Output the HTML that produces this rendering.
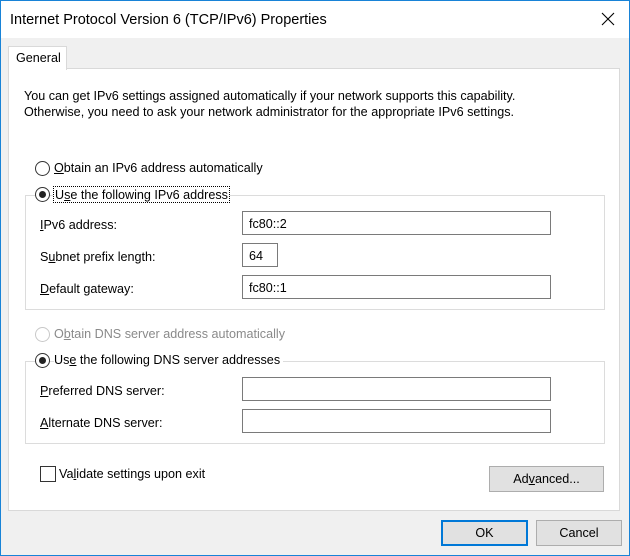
<!DOCTYPE html>
<html><head><meta charset="utf-8"><style>
*{margin:0;padding:0;box-sizing:border-box}
body{width:630px;height:556px;overflow:hidden;font-family:"Liberation Sans",sans-serif;font-size:12.6px;color:#000;background:#f0f0f0}
.win{position:absolute;left:0;top:0;width:630px;height:556px;background:#f0f0f0}
.bd{position:absolute;left:0;top:0;width:630px;height:556px;border:1px solid #1883d7;z-index:5;pointer-events:none}
.title{position:absolute;left:1px;top:1px;width:628px;height:37px;background:#fff}
.title span{position:absolute;left:9px;top:11px;font-size:14.5px}
.a{position:absolute;white-space:nowrap}
.panel{position:absolute;left:8px;top:68px;width:612px;height:443px;background:#fff;border:1px solid #d9d9d9}
.tab{position:absolute;left:8px;top:46px;width:59px;height:24px;background:#fff;border:1px solid #d9d9d9;border-bottom:none}
.grp{position:absolute;border:1px solid #dcdcdc}
.inp{position:absolute;border:1px solid #7a7a7a;background:#fff;height:24px;padding:5px 0 0 6px}
.rad{position:absolute;width:15px;height:15px;border:1px solid #333;border-radius:50%;background:#fff}
.rad.on::after{content:"";position:absolute;left:3px;top:3px;width:7px;height:7px;border-radius:50%;background:#222}
.btn{position:absolute;background:#e1e1e1;border:1px solid #adadad;text-align:center;height:26px;line-height:25px}
u{text-decoration:underline}
</style></head><body><div class="win">
<div class="bd"></div>
<div class="title"><span>Internet Protocol Version 6 (TCP/IPv6) Properties</span>
<svg style="position:absolute;left:600px;top:11px" width="14" height="14"><path d="M1 1L13 13M13 1L1 13" stroke="#000" stroke-width="1.1"/></svg></div>
<div class="panel"></div>
<div class="tab"></div>
<div class="a" style="left:16px;top:51px">General</div>
<div class="a" style="left:24px;top:88px;line-height:16px">You can get IPv6 settings assigned automatically if your network supports this capability.<br>Otherwise, you need to ask your network administrator for the appropriate IPv6 settings.</div>

<div class="grp" style="left:25px;top:195px;width:580px;height:115px"></div>
<div class="rad" style="left:35px;top:161px"></div>
<div class="a" style="left:54px;top:161px;background:#fff;padding-right:3px"><u>O</u>btain an IPv6 address automatically</div>
<div class="rad on" style="left:35px;top:187px"></div>
<div class="a" style="left:53px;top:186px;border:1px dotted #000;padding:0 1px;background:#fff;height:17px;line-height:16px">U<u>s</u>e the following IPv6 address</div>
<div class="a" style="left:40px;top:218px"><u>I</u>Pv6 address:</div>
<div class="inp" style="left:242px;top:211px;width:309px">fc80::2</div>
<div class="a" style="left:40px;top:250px">S<u>u</u>bnet prefix length:</div>
<div class="inp" style="left:242px;top:243px;width:36px">64</div>
<div class="a" style="left:40px;top:282px"><u>D</u>efault gateway:</div>
<div class="inp" style="left:242px;top:275px;width:309px">fc80::1</div>

<div class="grp" style="left:25px;top:361px;width:580px;height:83px"></div>
<div class="rad" style="left:35px;top:327px;border-color:#c8c8c8"></div>
<div class="a" style="left:54px;top:327px;color:#8a8a8a">O<u>b</u>tain DNS server address automatically</div>
<div class="rad on" style="left:35px;top:353px"></div>
<div class="a" style="left:54px;top:353px;background:#fff;padding-right:3px">Us<u>e</u> the following DNS server addresses</div>
<div class="a" style="left:40px;top:384px"><u>P</u>referred DNS server:</div>
<div class="inp" style="left:242px;top:377px;width:309px"></div>
<div class="a" style="left:40px;top:416px"><u>A</u>lternate DNS server:</div>
<div class="inp" style="left:242px;top:409px;width:309px"></div>

<div style="position:absolute;left:40px;top:466px;width:16px;height:16px;border:1px solid #333;background:#fff"></div>
<div class="a" style="left:59px;top:467px">Va<u>l</u>idate settings upon exit</div>
<div class="btn" style="left:489px;top:466px;width:115px">Ad<u>v</u>anced...</div>
<div class="btn" style="left:441px;top:520px;width:87px;border:2px solid #0078d7;line-height:23px">OK</div>
<div class="btn" style="left:536px;top:520px;width:86px">Cancel</div>
</div></body></html>
